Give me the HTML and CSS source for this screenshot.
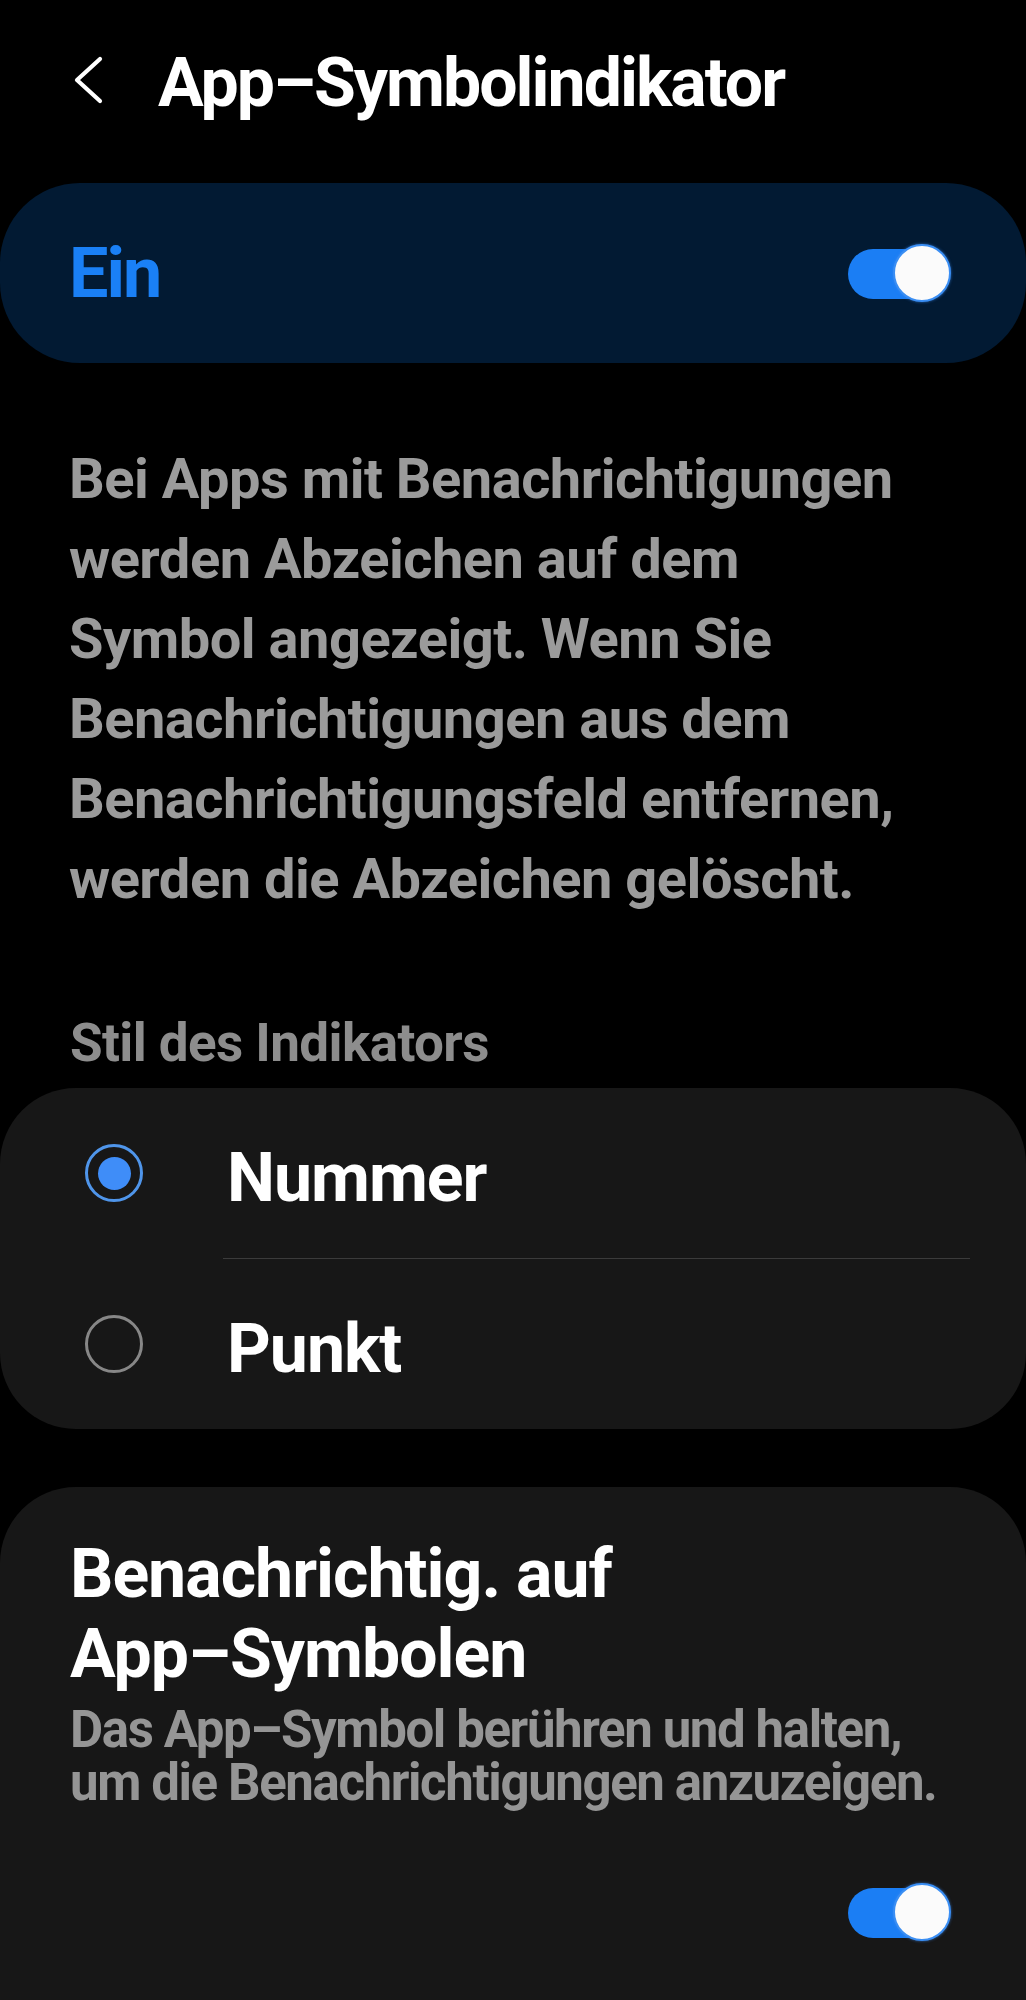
FILE: index.html
```html
<!DOCTYPE html>
<html lang="de">
<head>
<meta charset="utf-8">
<title>App–Symbolindikator</title>
<link rel="stylesheet" href="styles.css">
</head>
<body>
<div class="screen">
  <header class="appbar">
    <span class="back" aria-label="Zurück">
      <svg width="32" height="50" viewBox="0 0 32 50"><polyline points="27,4 4,25 27,46" fill="none" stroke="#fff" stroke-width="4.2" stroke-linecap="round" stroke-linejoin="round"/></svg>
    </span>
    <h1 class="title">App–Symbolindikator</h1>
  </header>

  <section class="master">
    <span class="master-label">Ein</span>
    <span class="switch"><span class="thumb"></span></span>
  </section>

  <p class="desc">Bei Apps mit Benachrichtigungen<br>werden Abzeichen auf dem<br>Symbol angezeigt. Wenn Sie<br>Benachrichtigungen aus dem<br>Benachrichtigungsfeld entfernen,<br>werden die Abzeichen gelöscht.</p>

  <h2 class="section-head">Stil des Indikators</h2>

  <section class="card radios">
    <div class="radio-row">
      <span class="radio checked"><span class="dot"></span></span>
      <span class="radio-label">Nummer</span>
    </div>
    <div class="divider"></div>
    <div class="radio-row">
      <span class="radio"></span>
      <span class="radio-label">Punkt</span>
    </div>
  </section>

  <section class="card pref">
    <div class="pref-title">Benachrichtig. auf<br>App–Symbolen</div>
    <div class="pref-sub">Das App–Symbol berühren und halten,<br>um die Benachrichtigungen anzuzeigen.</div>
    <div class="pref-switch"><span class="switch"><span class="thumb"></span></span></div>
  </section>
</div>
</body>
</html>
```

FILE: styles.css
```css
html, body {
  margin: 0;
  padding: 0;
  background: #000;
}
body {
  font-family: Roboto, "Noto Sans", "Liberation Sans", sans-serif;
  color: #fff;
  overflow: hidden;
}
.screen {
  width: 1026px;
  height: 2000px;
  overflow: hidden;
}
.appbar {
  box-sizing: border-box;
  height: 183px;
  padding: 43px 0 0 73px;
  display: flex;
  align-items: flex-start;
}
.back {
  display: block;
  width: 32px;
  height: 50px;
  margin-top: 12px;
}
.back svg { display: block; }
.title {
  margin: 0 0 0 53px;
  font-size: 68px;
  line-height: 80px;
  font-weight: 700;
  letter-spacing: -2px;
  white-space: nowrap;
}
.master {
  box-sizing: border-box;
  height: 180px;
  background: #021a33;
  border-radius: 80px;
  display: flex;
  align-items: center;
  justify-content: space-between;
  padding: 0 75px 0 69px;
}
.master-label {
  color: #1a80f6;
  font-size: 70px;
  font-weight: 700;
  letter-spacing: -2px;
  line-height: 80px;
}
.switch {
  position: relative;
  display: block;
  width: 103px;
  height: 58px;
}
.switch::before {
  content: "";
  position: absolute;
  left: 0;
  top: 5px;
  width: 88px;
  height: 50px;
  border-radius: 25px;
  background: #1b7ef4;
}
.thumb {
  position: absolute;
  right: 0;
  top: 0;
  box-sizing: border-box;
  width: 58px;
  height: 58px;
  border-radius: 50%;
  background: #fbfbfb;
  border: 2px solid #3a8ef3;
  box-shadow: 0 0 3px rgba(60, 140, 245, 0.7);
}
.desc {
  margin: 76px 0 0;
  padding-left: 69px;
  font-size: 56px;
  line-height: 80px;
  font-weight: 700;
  color: #9b9b9b;
  letter-spacing: -0.5px;
  white-space: nowrap;
}
.section-head {
  margin: 89px 0 0;
  padding-left: 70px;
  font-size: 53px;
  line-height: 70px;
  font-weight: 700;
  color: #8d8d8d;
  letter-spacing: -0.6px;
}
.card {
  background: #171717;
  border-radius: 76px;
}
.radios {
  margin-top: 10px;
  height: 341px;
  display: flex;
  flex-direction: column;
}
.radio-row {
  height: 170px;
  display: flex;
  align-items: center;
  padding-left: 85px;
}
.radio {
  box-sizing: border-box;
  width: 58px;
  height: 58px;
  border-radius: 50%;
  border: 3px solid #878787;
  display: flex;
  align-items: center;
  justify-content: center;
  flex: none;
}
.radio.checked {
  border-color: #4f95ea;
}
.dot {
  width: 33px;
  height: 33px;
  border-radius: 50%;
  background: #3f8df8;
}
.radio-label {
  margin-left: 84px;
  padding-top: 9px;
  font-size: 68px;
  line-height: 70px;
  font-weight: 700;
  letter-spacing: -1px;
  color: #fff;
}
.divider {
  height: 1px;
  background: #3b3b3b;
  margin: 0 56px 0 223px;
}
.pref {
  margin-top: 58px;
  padding: 47px 75px 120px 70px;
  min-height: 600px;
}
.pref-title {
  font-size: 68px;
  line-height: 80px;
  font-weight: 700;
  letter-spacing: -1px;
  color: #fff;
  white-space: nowrap;
}
.pref-sub {
  margin-top: 9px;
  font-size: 51px;
  line-height: 53px;
  font-weight: 700;
  color: #959595;
  letter-spacing: -1.4px;
  white-space: nowrap;
}
.pref-switch {
  margin-top: 74px;
  display: flex;
  justify-content: flex-end;
}
```
